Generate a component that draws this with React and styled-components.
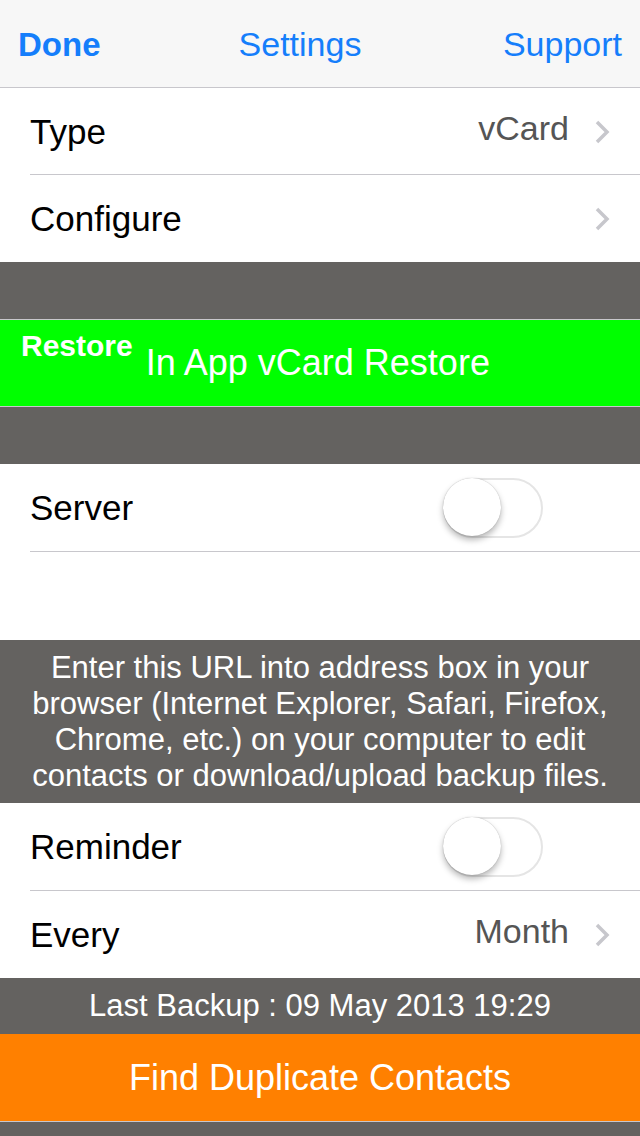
import React from "react";
import styled, { createGlobalStyle } from "styled-components";

const Global = createGlobalStyle`
  html, body { margin: 0; padding: 0; background: #ffffff; }
  body { font-family: "Liberation Sans", Arial, sans-serif; -webkit-font-smoothing: antialiased; }
`;

const Screen = styled.div`
  width: 640px;
  height: 1136px;
  overflow: hidden;
  display: flex;
  flex-direction: column;
  background: #ffffff;
`;

const NavBar = styled.div`
  height: 88px;
  flex-shrink: 0;
  background: #f7f7f7;
  border-bottom: 1px solid #c8c7cc;
  display: grid;
  grid-template-columns: 1fr auto 1fr;
  align-items: center;
  padding: 0 18px;
  box-sizing: border-box;
`;

const NavButton = styled.span`
  color: #157efb;
  font-size: ${p => (p.bold ? 33 : 34)}px;
  font-weight: ${p => (p.bold ? 700 : 400)};
  justify-self: ${p => p.align || "center"};
  margin: 2px ${p => p.shift || 0}px 0 0;
`;

const Row = styled.div`
  height: ${p => p.h || 87}px;
  flex-shrink: 0;
  display: flex;
  align-items: center;
  padding-left: 30px;
  position: relative;
  box-sizing: border-box;

  &::after {
    content: "";
    display: ${p => (p.last ? "none" : "block")};
    position: absolute;
    left: 30px;
    right: 0;
    bottom: 0;
    height: 1px;
    background: #c8c7cc;
  }
`;

const Label = styled.span`
  flex: 1;
  font-size: 35px;
  color: #000;
`;

const Value = styled.span`
  font-size: 34px;
  color: #555555;
  margin-right: 25px;
  margin-top: -6px;
`;

const Chevron = styled.svg`
  width: 16px;
  height: 26px;
  margin-right: 30px;
`;

const Arrow = () => (
  <Chevron viewBox="0 0 16 26">
    <path d="M3 3 L13 13 L3 23" fill="none" stroke="#c7c7cc" strokeWidth="3.5" />
  </Chevron>
);

const Toggle = styled.div`
  width: 100px;
  height: 60px;
  border-radius: 30px;
  border: 2px solid #e5e5e5;
  box-sizing: border-box;
  margin-right: 97px;
  position: relative;
  background: #fff;

  &::before {
    content: "";
    position: absolute;
    left: -2px;
    top: -2px;
    width: 58px;
    height: 58px;
    border-radius: 50%;
    background: #fff;
    box-shadow: 0 4px 6px rgba(0, 0, 0, 0.28), 0 0 1px rgba(0, 0, 0, 0.3);
  }
`;

const Band = styled.div`
  height: ${p => p.h}px;
  flex-shrink: 0;
  background: #646260;
  border-bottom: ${p => (p.line ? "1px solid #c8c7cc" : "none")};
  box-sizing: border-box;
  color: #fff;
  font-size: ${p => p.size || 31}px;
  text-align: center;
  display: flex;
  flex-direction: column;
  align-items: center;
  justify-content: center;
  line-height: 36px;
`;

const Line = styled.span`
  display: block;
  white-space: nowrap;
`;

const ActionBar = styled.div`
  height: ${p => p.h}px;
  flex-shrink: 0;
  background: ${p => p.color};
  border-bottom: 1px solid #c8c7cc;
  box-sizing: border-box;
  display: flex;
  align-items: center;
  justify-content: ${p => (p.center ? "center" : "flex-start")};
  color: #fff;
  font-size: 36px;
`;

const Tag = styled.span`
  font-size: 30px;
  font-weight: 700;
  margin: -34px 13px 0 21px;
`;

const Blank = styled.div`
  height: 88px;
  flex-shrink: 0;
  background: #fff;
`;

export default function App() {
  return (
    <>
      <Global />
      <Screen>
        <NavBar>
          <NavButton bold align="start">Done</NavButton>
          <NavButton shift={40}>Settings</NavButton>
          <NavButton align="end">Support</NavButton>
        </NavBar>
        <Row>
          <Label>Type</Label>
          <Value>vCard</Value>
          <Arrow />
        </Row>
        <Row last h={87}>
          <Label>Configure</Label>
          <Arrow />
        </Row>
        <Band h={58} line />
        <ActionBar h={87} color="#00ff00">
          <Tag>Restore</Tag>
          <span>In App vCard Restore</span>
        </ActionBar>
        <Band h={57} />
        <Row h={88}>
          <Label>Server</Label>
          <Toggle />
        </Row>
        <Blank />
        <Band h={163}>
          <Line>Enter this URL into address box in your</Line>
          <Line>browser (Internet Explorer, Safari, Firefox,</Line>
          <Line>Chrome, etc.) on your computer to edit</Line>
          <Line>contacts or download/upload backup files.</Line>
        </Band>
        <Row h={88}>
          <Label>Reminder</Label>
          <Toggle />
        </Row>
        <Row last h={87}>
          <Label>Every</Label>
          <Value>Month</Value>
          <Arrow />
        </Row>
        <Band h={56} size={31}>Last Backup : 09 May 2013 19:29</Band>
        <ActionBar h={88} color="#ff8000" center>Find Duplicate Contacts</ActionBar>
        <Band h={20} />
      </Screen>
    </>
  );
}
